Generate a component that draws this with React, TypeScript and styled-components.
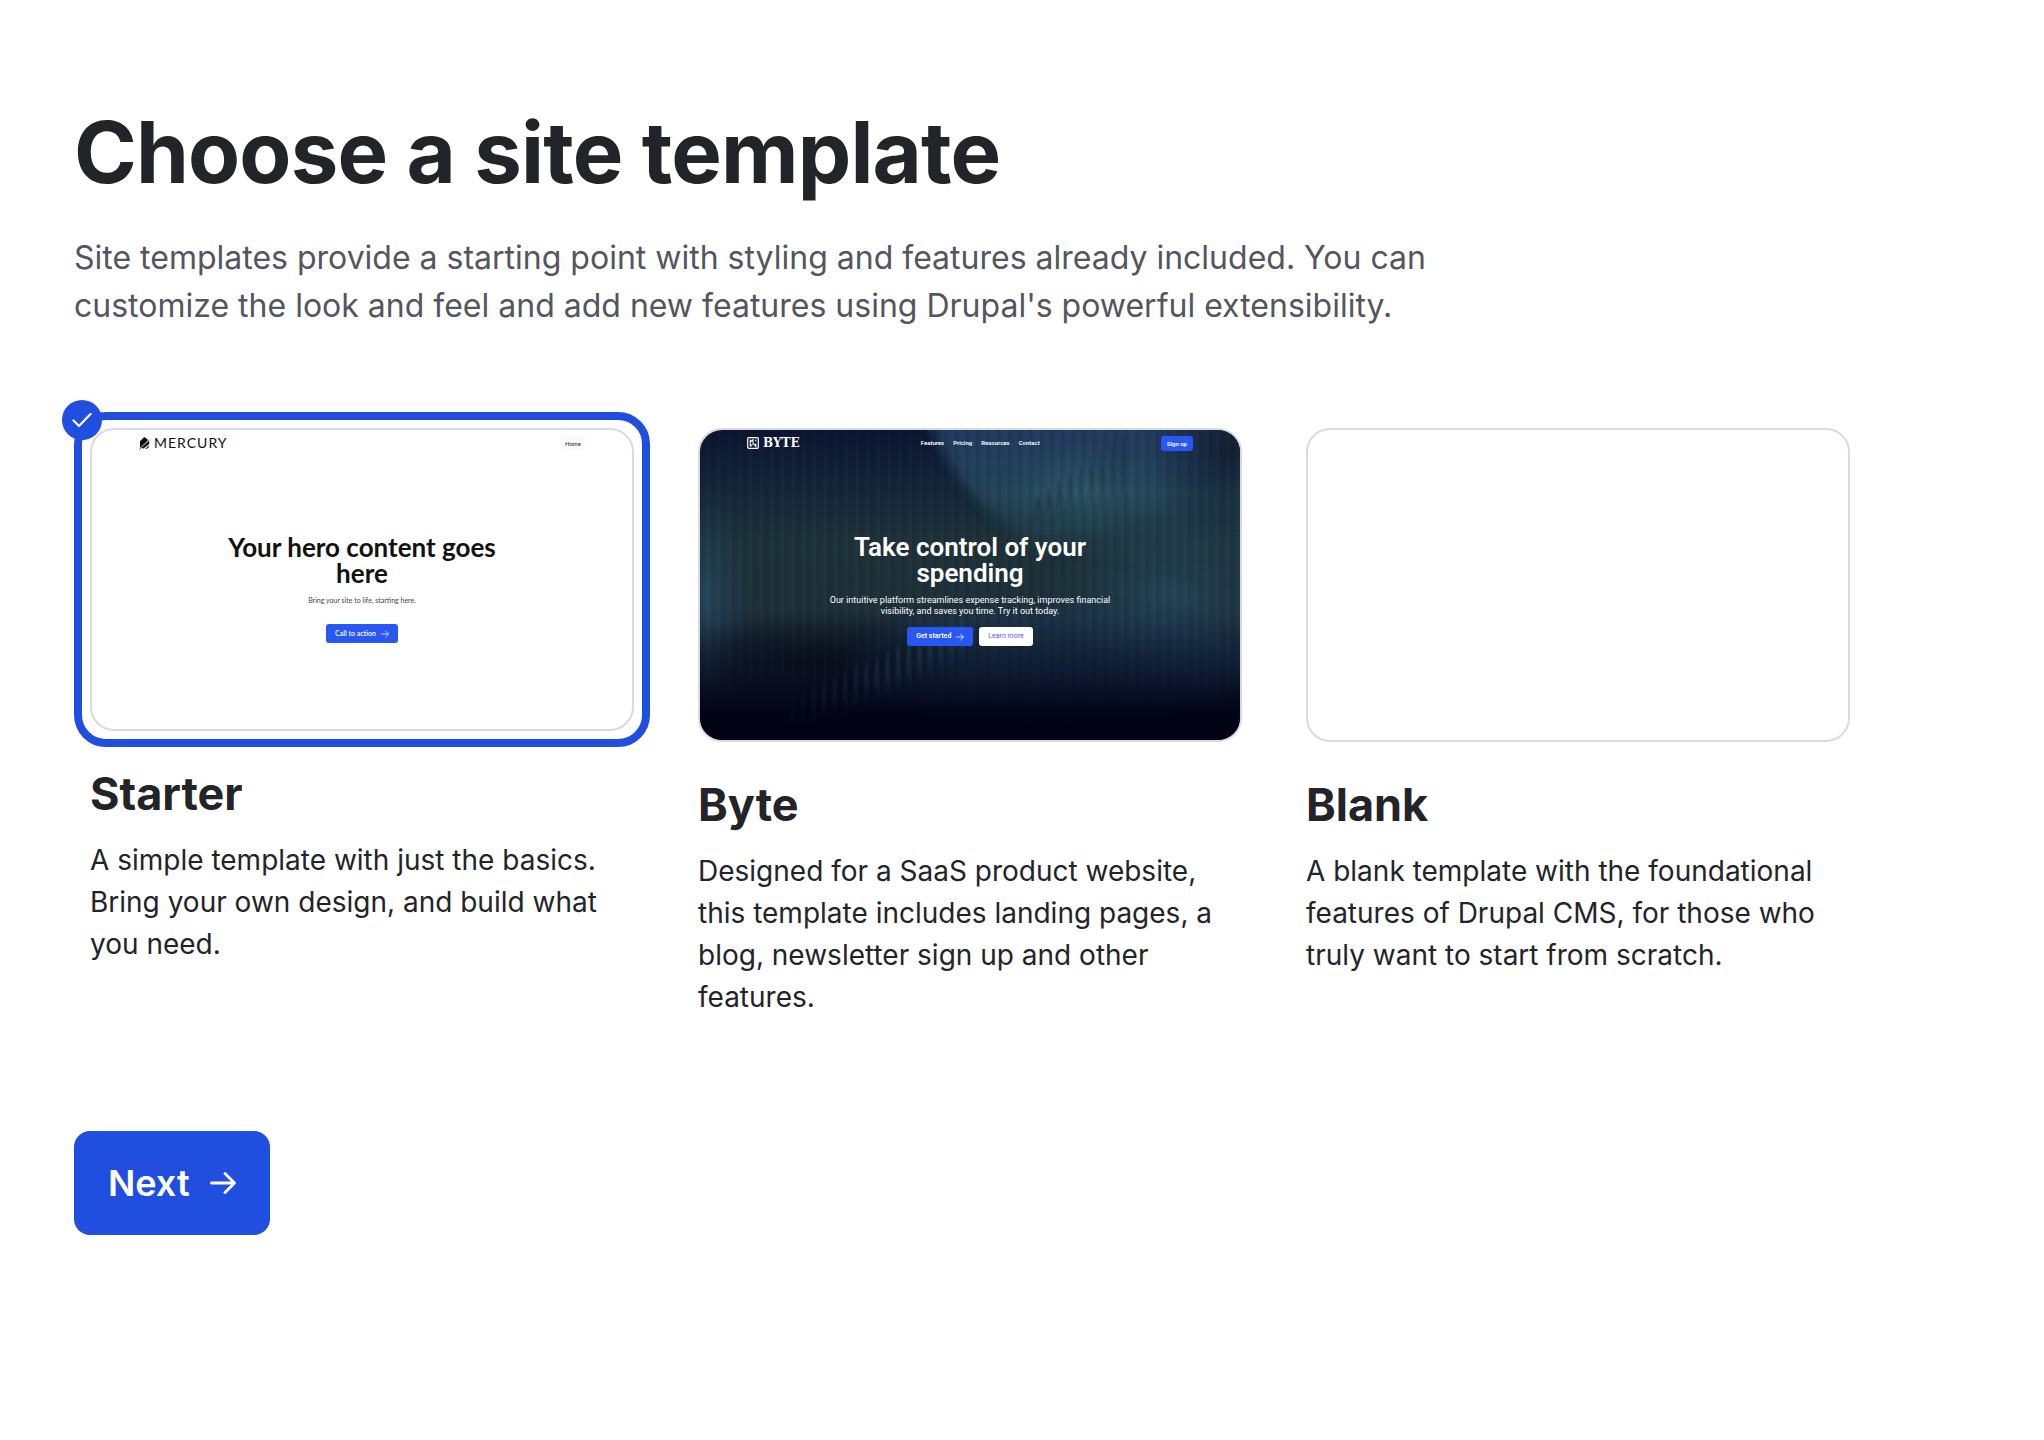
import React, { useState } from "react";
import styled, { createGlobalStyle } from "styled-components";

const color = {
  text: "#232429",
  muted: "#55555f",
  primary: "#204fdf",
  cta: "#2857f2",
  line: "#d9dae0",
};

const GlobalStyle = createGlobalStyle`
  *, *::before, *::after { box-sizing: border-box; }
  body {
    margin: 0;
    background: #fff;
    color: ${color.text};
    font-family: Inter, "Liberation Sans", sans-serif;
  }
`;

const Page = styled.main`
  padding: 100px 74px;
`;

const PageTitle = styled.h1`
  margin: 0 0 28px;
  font-size: 85px;
  line-height: 106px;
  font-weight: 700;
  letter-spacing: -0.01em;
`;

const Lead = styled.p`
  max-width: 1400px;
  margin: 0 0 82px;
  font-size: 32px;
  line-height: 48px;
  color: ${color.muted};
`;

const TemplateGrid = styled.fieldset`
  display: grid;
  grid-template-columns: repeat(3, minmax(0, 1fr));
  gap: 32px;
  max-width: 1792px;
  margin: 0 0 113px;
  padding: 0;
  border: 0;
`;

const Card = styled.label`
  position: relative;
  display: block;
  cursor: pointer;
`;

const Radio = styled.input`
  position: absolute;
  top: 0;
  left: 0;
  margin: 0;
  opacity: 0;
`;

const Frame = styled.span<{ $selected: boolean }>`
  display: block;
  padding: 8px;
  border: 8px solid ${(p) => (p.$selected ? color.primary : "transparent")};
  border-radius: 32px;
`;

const Badge = styled.span`
  position: absolute;
  top: -12px;
  left: -12px;
  display: flex;
  align-items: center;
  justify-content: center;
  width: 40px;
  height: 40px;
  border-radius: 50%;
  background: ${color.primary};
  color: #fff;
`;

const Thumb = styled.span<{ $ratio: string }>`
  position: relative;
  display: flex;
  flex-direction: column;
  aspect-ratio: ${(p) => p.$ratio};
  border: 2px solid ${color.line};
  border-radius: 24px;
  overflow: hidden;
  isolation: isolate;
`;

const CardText = styled.span`
  display: block;
  padding: 20px 16px 0;
`;

const CardTitle = styled.span`
  display: block;
  margin-bottom: 18px;
  font-size: 45px;
  line-height: 54px;
  font-weight: 700;
`;

const CardDescription = styled.span`
  display: block;
  font-size: 28px;
  line-height: 42px;
`;

const NextButton = styled.button`
  display: inline-flex;
  align-items: center;
  gap: 20px;
  height: 104px;
  padding: 0 34px;
  border: 0;
  border-radius: 16px;
  background: ${color.primary};
  color: #fff;
  font: 600 36px/44px Inter, "Liberation Sans", sans-serif;
  cursor: pointer;
`;

/* Miniature sites shown inside the thumbnails */

const MiniHeader = styled.span`
  display: flex;
  align-items: center;
  justify-content: space-between;
  height: 26px;
  padding: 0 47px;
`;

const MiniLogo = styled.span`
  display: flex;
  align-items: center;
  gap: 4px;
`;

const MercuryName = styled.span`
  font: 400 14px/16px Lato, sans-serif;
  letter-spacing: 1px;
  color: #111;
`;

const ByteName = styled.span`
  font: 700 12px/14px "DejaVu Serif", serif;
  color: #fff;
`;

const MiniNav = styled.span`
  display: flex;
  gap: 9px;
  font: 600 6px/10px Roboto, sans-serif;
  color: #fff;
`;

const HomeTag = styled.span`
  padding: 3px 4px;
  background: #f9fbfb;
  font: 500 6px/9px Lato, sans-serif;
  color: #333;
`;

const MiniHero = styled.span<{ $face: string; $color: string }>`
  display: flex;
  flex-direction: column;
  align-items: center;
  padding-top: 78px;
  font-family: ${(p) => p.$face};
  color: ${(p) => p.$color};
  text-align: center;
`;

const MiniTitle = styled.span<{ $weight: number }>`
  max-width: 270px;
  font-size: 26px;
  line-height: 26px;
  font-weight: ${(p) => p.$weight};
`;

const MiniCopy = styled.span<{ $size: number; $gap: number; $color?: string }>`
  max-width: 296px;
  margin: 9px 0 ${(p) => p.$gap}px;
  font-size: ${(p) => p.$size}px;
  line-height: 11px;
  color: ${(p) => p.$color ?? "inherit"};
`;

const MiniActions = styled.span`
  display: flex;
  gap: 6px;
`;

const MiniButton = styled.span<{ $light?: boolean }>`
  display: flex;
  align-items: center;
  justify-content: center;
  gap: 5px;
  height: 19px;
  padding: 0 9px;
  border-radius: 3px;
  background: ${(p) => (p.$light ? "#fff" : color.cta)};
  color: ${(p) => (p.$light ? "#4a62dc" : "#fff")};
  font-size: 7px;
  line-height: 9px;
  font-weight: ${(p) => (p.$light ? 400 : 600)};
`;

const SignUp = styled.span`
  padding: 3px 6px;
  border-radius: 3px;
  background: ${color.cta};
  color: #fff;
  font: 600 6px/9px Roboto, sans-serif;
`;

const Backdrop = styled.svg`
  position: absolute;
  inset: 0;
  z-index: -1;
  width: 100%;
  height: 100%;
`;

const CheckIcon = () => (
  <svg width="20" height="16" viewBox="0 0 20 16" fill="none" aria-hidden="true">
    <path d="M1.5 8.5 7 14 18.5 2" stroke="currentColor" strokeWidth="2.2" strokeLinecap="round" strokeLinejoin="round" />
  </svg>
);

const ArrowIcon = ({ size, weight = 2.4 }: { size: number; weight?: number }) => (
  <svg width={size} height={size} viewBox="0 0 26 26" fill="none" aria-hidden="true">
    <path d="M1.5 13H24.5M15 3.5 24.5 13 15 22.5" stroke="currentColor" strokeWidth={weight} strokeLinecap="round" strokeLinejoin="round" />
  </svg>
);

const MercuryMark = () => (
  <svg width="11" height="13" viewBox="0 0 11 13" aria-hidden="true">
    <path d="M5.3 0 9.3 3 1 11V4.2Z" fill="#0b0b0b" />
    <path d="M10.2 3.8V7L4.6 11.6 2.4 11Z" fill="#0b0b0b" />
    <path d="M.4 12.6 10.4 3.2" stroke="#222" strokeWidth=".7" />
    <path d="M6 12 10.4 8.2C10 10.6 8.4 12 6 12Z" fill="#0b0b0b" />
  </svg>
);

const ByteMark = () => (
  <svg width="12" height="12" viewBox="0 0 12 12" fill="none" stroke="#fff" aria-hidden="true">
    <rect x=".7" y=".7" width="10.6" height="10.6" rx="1" strokeWidth="1.2" />
    <path d="M3.3 2.4V9.6M3.3 5 6 2.6V6L8.8 9.4V6.4M8.8 2.4V4.6M3.4 9.4 5.6 7.4" strokeWidth="1.1" />
  </svg>
);

const spikes = Array.from({ length: 17 }, (_, i) => ({
  x: 92 + i * 10.6,
  top: 262 - i * 4.8,
  opacity: 0.1 + Math.min(i, 10) * 0.05,
}));

const shadows = Array.from({ length: 9 }, (_, i) => ({
  x: 338 + i * 10.6,
  top: 66 - i * 8,
}));

const ByteBackdrop = () => (
  <Backdrop viewBox="0 0 540 310" preserveAspectRatio="none" aria-hidden="true">
    <defs>
      <linearGradient id="base" x1="0" y1="0" x2="0" y2="1">
        <stop offset="0" stopColor="#0a1530" />
        <stop offset=".16" stopColor="#142338" />
        <stop offset=".36" stopColor="#1e3239" />
        <stop offset=".58" stopColor="#1e3039" />
        <stop offset=".76" stopColor="#121f32" />
        <stop offset="1" stopColor="#081022" />
      </linearGradient>
      <linearGradient id="wave" x1="0" y1="0" x2="0" y2="1">
        <stop offset="0" stopColor="#1d3462" />
        <stop offset=".5" stopColor="#254558" />
        <stop offset="1" stopColor="#20383f" stopOpacity="0" />
      </linearGradient>
      <linearGradient id="floor" x1="0" y1="0" x2="0" y2="1">
        <stop offset="0" stopColor="#010112" stopOpacity="0" />
        <stop offset=".45" stopColor="#010112" stopOpacity=".28" />
        <stop offset=".8" stopColor="#010112" stopOpacity=".88" />
        <stop offset="1" stopColor="#010114" />
      </linearGradient>
      <linearGradient id="spike" x1="0" y1="0" x2="0" y2="1">
        <stop offset="0" stopColor="#34688a" />
        <stop offset="1" stopColor="#16304e" stopOpacity="0" />
      </linearGradient>
      <linearGradient id="shade" x1="0" y1="0" x2="0" y2="1">
        <stop offset="0" stopColor="#122536" />
        <stop offset="1" stopColor="#1a333e" stopOpacity="0" />
      </linearGradient>
      <radialGradient id="teal">
        <stop offset="0" stopColor="#3d6e7c" stopOpacity=".75" />
        <stop offset="1" stopColor="#2b5463" stopOpacity="0" />
      </radialGradient>
      <radialGradient id="blue">
        <stop offset="0" stopColor="#2a5068" stopOpacity=".7" />
        <stop offset="1" stopColor="#203f54" stopOpacity="0" />
      </radialGradient>
      <radialGradient id="dark">
        <stop offset="0" stopColor="#080c16" stopOpacity=".75" />
        <stop offset="1" stopColor="#080c16" stopOpacity="0" />
      </radialGradient>
      <filter id="soften" x="-10%" y="-10%" width="120%" height="120%">
        <feGaussianBlur stdDeviation="6" />
      </filter>
      <filter id="soft">
        <feGaussianBlur stdDeviation=".8" />
      </filter>
      <pattern id="ribs" width="10.6" height="310" patternUnits="userSpaceOnUse">
        <rect width="3" height="310" fill="#050b18" opacity=".09" />
        <rect x="3" width="2" height="310" fill="#050b18" opacity=".04" />
        <rect x="8" width="2" height="310" fill="#6aa0b8" opacity=".03" />
      </pattern>
    </defs>
    <rect width="540" height="310" fill="url(#base)" />
    <path d="M222 -30C238 30 275 75 330 115L580 160V-30Z" fill="url(#wave)" filter="url(#soften)" />
    <ellipse cx="385" cy="62" rx="90" ry="50" fill="url(#teal)" opacity=".75" />
    <ellipse cx="530" cy="20" rx="80" ry="100" fill="url(#dark)" opacity=".8" />
    <ellipse cx="4" cy="165" rx="50" ry="110" fill="url(#blue)" />
    <ellipse cx="470" cy="165" rx="130" ry="80" fill="url(#blue)" opacity=".9" />
    <ellipse cx="350" cy="235" rx="200" ry="60" fill="#1b3c64" opacity=".25" filter="url(#soften)" />
    <ellipse cx="120" cy="230" rx="150" ry="50" fill="url(#dark)" />
    <g filter="url(#soft)">
      {shadows.map((s) => (
        <path key={s.x} d={`M${s.x} ${s.top}L${s.x + 5} 94H${s.x - 5}Z`} fill="url(#shade)" opacity=".85" />
      ))}
    </g>
    <rect width="540" height="310" fill="url(#ribs)" />
    <rect y="190" width="540" height="120" fill="url(#floor)" />
    <g filter="url(#soft)">
      {spikes.map((s) => (
        <path key={s.x} d={`M${s.x} ${s.top}L${s.x + 4} ${s.top + 50}H${s.x - 4}Z`} fill="url(#spike)" opacity={s.opacity} />
      ))}
    </g>
  </Backdrop>
);

const StarterPreview = () => (
  <>
    <MiniHeader>
      <MiniLogo>
        <MercuryMark />
        <MercuryName>MERCURY</MercuryName>
      </MiniLogo>
      <HomeTag>Home</HomeTag>
    </MiniHeader>
    <MiniHero $face="Lato, sans-serif" $color="#111">
      <MiniTitle $weight={700}>Your hero content goes here</MiniTitle>
      <MiniCopy $size={7} $gap={18} $color="#444">Bring your site to life, starting here.</MiniCopy>
      <MiniButton>
        Call to action
        <ArrowIcon size={8} />
      </MiniButton>
    </MiniHero>
  </>
);

const BytePreview = () => (
  <>
    <ByteBackdrop />
    <MiniHeader>
      <MiniLogo>
        <ByteMark />
        <ByteName>BYTE</ByteName>
      </MiniLogo>
      <MiniNav>
        <span>Features</span>
        <span>Pricing</span>
        <span>Resources</span>
        <span>Contact</span>
      </MiniNav>
      <SignUp>Sign up</SignUp>
    </MiniHeader>
    <MiniHero $face="Roboto, sans-serif" $color="#fff">
      <MiniTitle $weight={600}>Take control of your spending</MiniTitle>
      <MiniCopy $size={9} $gap={10}>
        Our intuitive platform streamlines expense tracking, improves financial visibility, and saves you time. Try it out today.
      </MiniCopy>
      <MiniActions>
        <MiniButton>
          Get started
          <ArrowIcon size={8} />
        </MiniButton>
        <MiniButton $light>Learn more</MiniButton>
      </MiniActions>
    </MiniHero>
  </>
);

const templates = [
  {
    id: "starter",
    name: "Starter",
    ratio: "544 / 303",
    preview: <StarterPreview />,
    description: "A simple template with just the basics. Bring your own design, and build what you need.",
  },
  {
    id: "byte",
    name: "Byte",
    ratio: "544 / 314",
    preview: <BytePreview />,
    description: "Designed for a SaaS product website, this template includes landing pages, a blog, newsletter sign up and other features.",
  },
  {
    id: "blank",
    name: "Blank",
    ratio: "544 / 314",
    preview: null,
    description: "A blank template with the foundational features of Drupal CMS, for those who truly want to start from scratch.",
  },
];

export default function App() {
  const [selected, setSelected] = useState("starter");

  return (
    <>
      <GlobalStyle />
      <Page>
        <PageTitle>Choose a site template</PageTitle>
        <Lead>
          Site templates provide a starting point with styling and features already included. You can customize the look and feel and add new
          features using Drupal's powerful extensibility.
        </Lead>
        <TemplateGrid aria-label="Site template">
          {templates.map((t) => (
            <Card key={t.id} htmlFor={t.id}>
              <Radio
                type="radio"
                id={t.id}
                name="template"
                value={t.id}
                checked={selected === t.id}
                onChange={() => setSelected(t.id)}
              />
              <Frame $selected={selected === t.id}>
                <Thumb $ratio={t.ratio}>{t.preview}</Thumb>
              </Frame>
              {selected === t.id && (
                <Badge>
                  <CheckIcon />
                </Badge>
              )}
              <CardText>
                <CardTitle>{t.name}</CardTitle>
                <CardDescription>{t.description}</CardDescription>
              </CardText>
            </Card>
          ))}
        </TemplateGrid>
        <NextButton type="button">
          Next
          <ArrowIcon size={26} weight={2.8} />
        </NextButton>
      </Page>
    </>
  );
}
